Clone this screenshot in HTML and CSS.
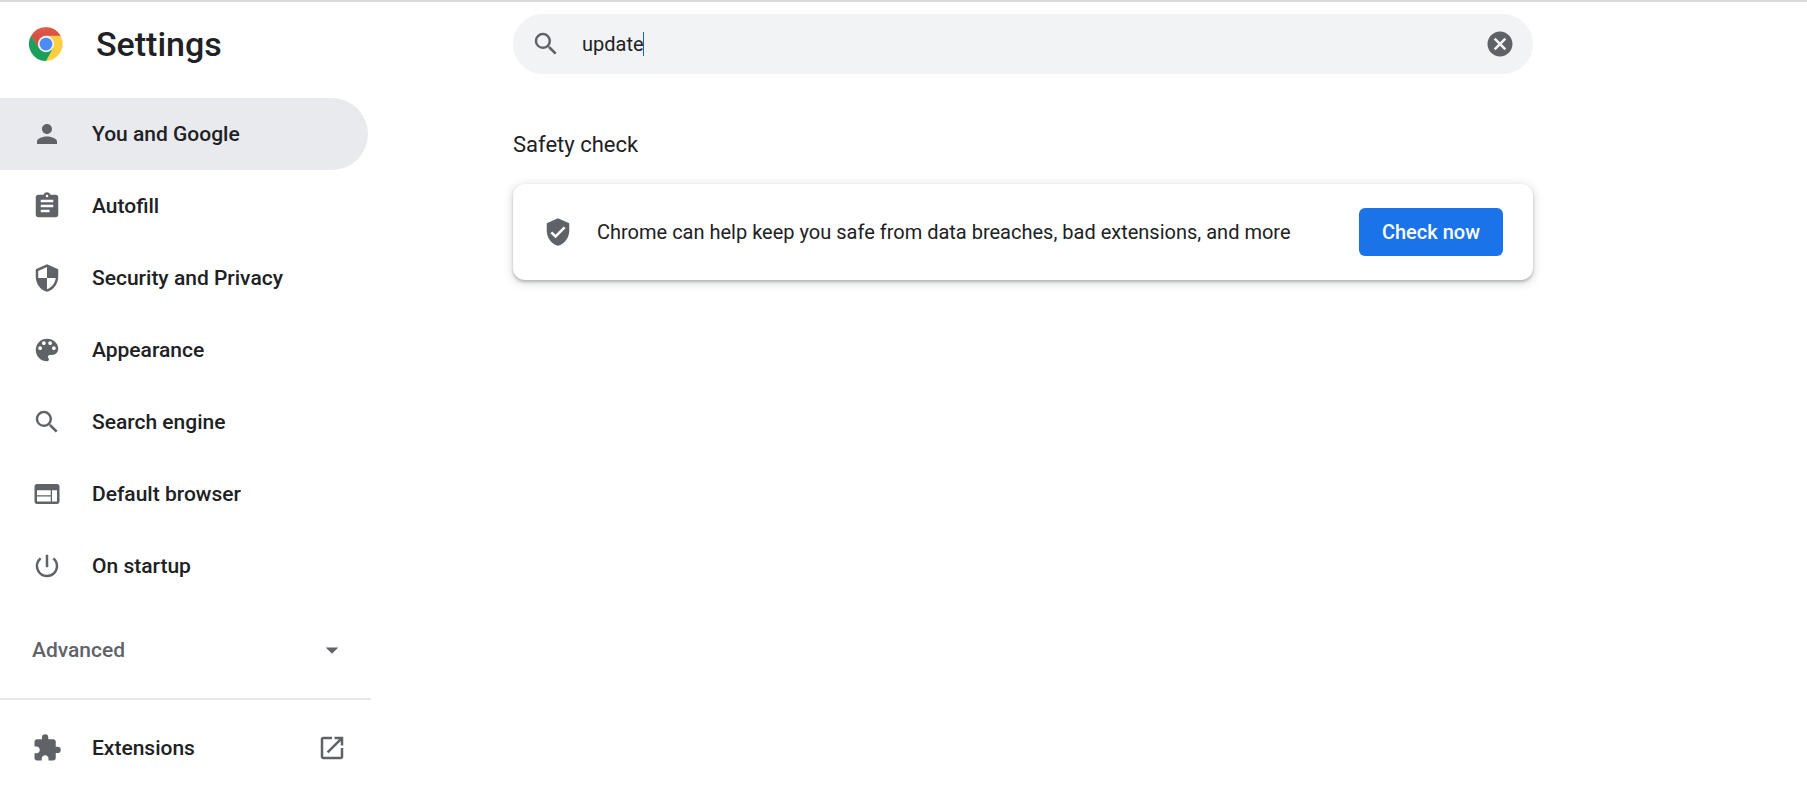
FILE: index.html
```
<!DOCTYPE html>
<html lang="en">
<head>
  <meta charset="UTF-8" />
  <meta name="viewport" content="width=device-width, initial-scale=1.0"/>
  <title>Settings</title>
  <link rel="stylesheet" href="styles.css">
</head>
<body>
  <header class="toolbar">
    <div class="brand">
      <svg class="logo" viewBox="0 0 48 48" aria-hidden="true">
        <defs>
          <linearGradient id="red" x1="0" y1="0" x2="0" y2="1">
            <stop offset="0" stop-color="#e0594c"/>
            <stop offset="1" stop-color="#cf463b"/>
          </linearGradient>
        </defs>
        <circle cx="24" cy="24" r="23.5" fill="#ffcd40"/>
        <path d="M3.2 12A24 24 0 0 0 24 48L34 29.5 24 34 14 29.5Z" fill="#1a9f5c"/>
        <path d="M3.2 12A24 24 0 0 1 44.8 12.5H24L14 29.5Z" fill="url(#red)"/>
        <circle cx="24" cy="24" r="11.5" fill="#f1f1f1"/>
        <circle cx="24" cy="24" r="9" fill="#4c8bf5"/>
      </svg>
      <h1>Settings</h1>
    </div>
    <form class="search" role="search">
      <svg class="icon" viewBox="0 0 24 24" aria-hidden="true"><path d="M15.5 14h-.79l-.28-.27A6.471 6.471 0 0 0 16 9.5 6.5 6.5 0 1 0 9.5 16c1.61 0 3.09-.59 4.23-1.57l.27.28v.79l5 4.99L20.49 19l-4.99-5zm-6 0C7.01 14 5 11.99 5 9.5S7.01 5 9.5 5 14 7.01 14 9.5 11.99 14 9.5 14z"/></svg>
      <input type="text" class="search-input" value="update" aria-label="Search settings" />
      <button type="reset" class="clear" aria-label="Clear search">
        <svg class="icon" viewBox="0 0 24 24" aria-hidden="true"><path d="M12 2C6.47 2 2 6.47 2 12s4.47 10 10 10 10-4.47 10-10S17.53 2 12 2zm5 13.59L15.59 17 12 13.41 8.41 17 7 15.59 10.59 12 7 8.41 8.41 7 12 10.59 15.59 7 17 8.41 13.41 12 17 15.59z"/></svg>
      </button>
    </form>
  </header>

  <div class="container">
    <nav class="menu">
      <a class="item selected" href="#people">
        <svg class="icon" viewBox="0 0 24 24" aria-hidden="true"><path d="M12 12c2.21 0 4-1.79 4-4s-1.79-4-4-4-4 1.79-4 4 1.79 4 4 4zm0 2c-2.67 0-8 1.34-8 4v2h16v-2c0-2.66-5.33-4-8-4z"/></svg>
        <span>You and Google</span>
      </a>
      <a class="item" href="#autofill">
        <svg class="icon" viewBox="0 0 24 24" aria-hidden="true"><path d="M19 3h-4.18C14.4 1.84 13.3 1 12 1c-1.3 0-2.4.84-2.82 2H5c-1.1 0-2 .9-2 2v14c0 1.1.9 2 2 2h14c1.1 0 2-.9 2-2V5c0-1.1-.9-2-2-2zm-7 0c.55 0 1 .45 1 1s-.45 1-1 1-1-.45-1-1 .45-1 1-1zm2 14H7v-2h7v2zm3-4H7v-2h10v2zm0-4H7V7h10v2z"/></svg>
        <span>Autofill</span>
      </a>
      <a class="item" href="#privacy">
        <svg class="icon" viewBox="0 0 24 24" aria-hidden="true"><path d="M12 1L3 5v6c0 5.55 3.84 10.74 9 12 5.16-1.26 9-6.45 9-12V5l-9-4zm0 10.99h7c-.53 4.12-3.28 7.79-7 8.94V12H5V6.3l7-3.11v8.8z"/></svg>
        <span>Security and Privacy</span>
      </a>
      <a class="item" href="#appearance">
        <svg class="icon" viewBox="0 0 24 24" aria-hidden="true"><path d="M12 3a9 9 0 0 0 0 18c.83 0 1.5-.67 1.5-1.5 0-.39-.15-.74-.39-1.01-.23-.26-.38-.61-.38-.99 0-.83.67-1.5 1.5-1.5H16c2.76 0 5-2.24 5-5 0-4.42-4.03-8-9-8zm-5.5 9c-.83 0-1.5-.67-1.5-1.5S5.67 9 6.5 9 8 9.67 8 10.5 7.33 12 6.5 12zm3-4C8.67 8 8 7.33 8 6.5S8.67 5 9.5 5s1.5.67 1.5 1.5S10.33 8 9.5 8zm5 0c-.83 0-1.5-.67-1.5-1.5S13.67 5 14.5 5s1.5.67 1.5 1.5S15.33 8 14.5 8zm3 4c-.83 0-1.5-.67-1.5-1.5S16.67 9 17.5 9s1.5.67 1.5 1.5-.67 1.5-1.5 1.5z"/></svg>
        <span>Appearance</span>
      </a>
      <a class="item" href="#search">
        <svg class="icon" viewBox="0 0 24 24" aria-hidden="true"><path d="M15.5 14h-.79l-.28-.27A6.471 6.471 0 0 0 16 9.5 6.5 6.5 0 1 0 9.5 16c1.61 0 3.09-.59 4.23-1.57l.27.28v.79l5 4.99L20.49 19l-4.99-5zm-6 0C7.01 14 5 11.99 5 9.5S7.01 5 9.5 5 14 7.01 14 9.5 11.99 14 9.5 14z"/></svg>
        <span>Search engine</span>
      </a>
      <a class="item" href="#defaultBrowser">
        <svg class="icon" viewBox="0 0 24 24" aria-hidden="true"><path d="M20 4H4c-1.1 0-1.99.9-1.99 2L2 18c0 1.1.9 2 2 2h16c1.1 0 2-.9 2-2V6c0-1.1-.9-2-2-2zm-5 14H4v-4h11v4zm0-5H4V9h11v4zm5 5h-4V9h4v9z"/></svg>
        <span>Default browser</span>
      </a>
      <a class="item" href="#onStartup">
        <svg class="icon" viewBox="0 0 24 24" aria-hidden="true"><path d="M13 3h-2v10h2V3zm4.83 2.17l-1.42 1.42A6.92 6.92 0 0 1 19 12c0 3.87-3.13 7-7 7A6.995 6.995 0 0 1 7.58 6.58L6.17 5.17A8.932 8.932 0 0 0 3 12a9 9 0 0 0 18 0c0-2.74-1.23-5.18-3.17-6.83z"/></svg>
        <span>On startup</span>
      </a>
      <button type="button" class="advanced" aria-expanded="false">
        <span>Advanced</span>
        <svg class="icon" viewBox="0 0 24 24" aria-hidden="true"><path d="M7 10l5 5 5-5z"/></svg>
      </button>
      <hr class="separator">
      <a class="item" href="#extensions">
        <svg class="icon" viewBox="0 0 24 24" aria-hidden="true"><path d="M20.5 11H19V7c0-1.1-.9-2-2-2h-4V3.5a2.5 2.5 0 0 0-5 0V5H4c-1.1 0-1.99.9-1.99 2v3.8H3.5c1.49 0 2.7 1.21 2.7 2.7s-1.21 2.7-2.7 2.7H2V20c0 1.1.9 2 2 2h3.8v-1.5c0-1.49 1.21-2.7 2.7-2.7s2.7 1.21 2.7 2.7V22H17c1.1 0 2-.9 2-2v-4h1.5a2.5 2.5 0 0 0 0-5z"/></svg>
        <span class="grow">Extensions</span>
        <svg class="icon" viewBox="0 0 24 24" aria-hidden="true"><path d="M19 19H5V5h7V3H5c-1.11 0-2 .9-2 2v14c0 1.1.89 2 2 2h14c1.1 0 2-.9 2-2v-7h-2v7zM14 3v2h3.59l-9.83 9.83 1.41 1.41L19 6.41V10h2V3h-7z"/></svg>
      </a>
    </nav>

    <main class="content">
      <h2>Safety check</h2>
      <section class="card">
        <svg class="icon" viewBox="0 0 24 24" aria-hidden="true"><path d="M12 1L3 5v6c0 5.55 3.84 10.74 9 12 5.16-1.26 9-6.45 9-12V5l-9-4zm-2 16l-4-4 1.41-1.41L10 14.17l6.59-6.59L18 9l-8 8z"/></svg>
        <p>Chrome can help keep you safe from data breaches, bad extensions, and more</p>
        <button type="button" class="action">Check now</button>
      </section>
    </main>
  </div>
</body>
</html>
```
FILE: styles.css
```
* {
  box-sizing: border-box;
}

body {
  margin: 0;
  border-top: 2px solid #dadada;
  background: #fff;
  color: #202124;
  font-family: Roboto, "Liberation Sans", sans-serif;
  font-size: 20px;
  line-height: 30px;
}

h1, h2, p {
  margin: 0;
}

button {
  font: inherit;
  border: none;
  cursor: pointer;
}

.icon {
  width: 30px;
  height: 30px;
  flex: none;
  display: block;
  fill: #5f6368;
}

.toolbar, .container {
  display: grid;
  grid-template-columns: 513px minmax(0, 1020px);
}

.toolbar {
  align-items: center;
  height: 84px;
}

.brand {
  display: flex;
  align-items: center;
  gap: 33px;
  padding-left: 29px;
}

.logo {
  width: 34px;
  height: 34px;
}

h1 {
  font-size: 34px;
  font-weight: 500;
  line-height: 42px;
}

.search {
  display: flex;
  align-items: center;
  height: 60px;
  padding: 0 18px;
  border-radius: 30px;
  background: #f1f3f4;
}

.search-input {
  flex: 1;
  min-width: 0;
  height: 30px;
  margin-left: 21px;
  padding: 0;
  border: none;
  outline: none;
  /* text cursor after the query */
  background: linear-gradient(#1a5fc8, #1a5fc8) 61px center / 1px 24px no-repeat;
  color: inherit;
  font: inherit;
}

.clear {
  padding: 0;
  background: none;
}

.menu {
  width: 371px;
  padding-top: 12px;
  font-size: 21px;
  font-weight: 500;
}

.item {
  display: flex;
  align-items: center;
  gap: 30px;
  width: 368px;
  height: 72px;
  padding: 0 21px 0 32px;
  border-radius: 0 36px 36px 0;
  color: inherit;
  text-decoration: none;
}

.item.selected {
  background: #e8eaed;
}

.grow {
  flex: 1;
}

.advanced {
  display: flex;
  align-items: center;
  justify-content: space-between;
  width: 368px;
  height: 72px;
  margin: 12px 0;
  padding: 0 21px 0 32px;
  background: none;
  color: #5f6368;
}

.separator {
  height: 2px;
  margin: 0 0 12px;
  border: none;
  background: #e8e8e8;
}

.content {
  padding-top: 44px;
}

h2 {
  font-size: 22px;
  font-weight: 400;
}

.card {
  display: flex;
  align-items: center;
  gap: 24px;
  min-height: 96px;
  margin-top: 24px;
  padding: 24px 30px;
  border-radius: 12px;
  box-shadow: 0 2px 3px rgba(60, 64, 67, 0.3), 0 2px 9px 2px rgba(60, 64, 67, 0.15);
}

.card p {
  flex: 1;
}

.action {
  height: 48px;
  padding: 0 23px;
  border-radius: 6px;
  background: #1a73e8;
  color: #fff;
  font-weight: 500;
}
```
